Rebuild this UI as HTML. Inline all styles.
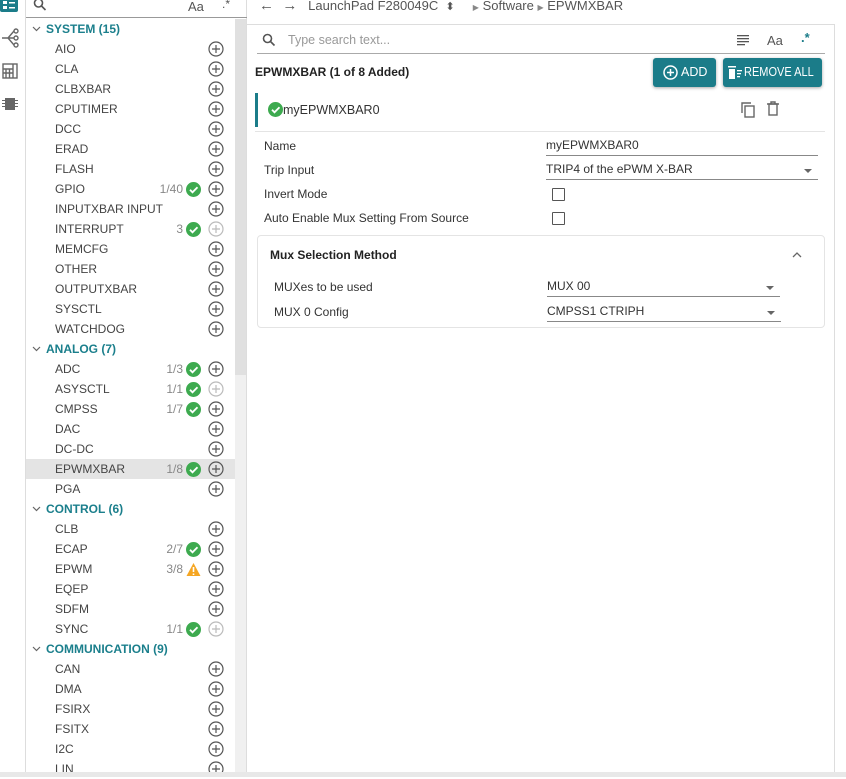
<!DOCTYPE html><html><head><meta charset="utf-8"><style>
*{box-sizing:border-box;margin:0;padding:0}
body{width:846px;height:777px;overflow:hidden;background:#fff;font-family:"Liberation Sans",sans-serif;font-size:12px;color:#333;position:relative}
.abs{position:absolute}
#iconbar{left:0;top:0;width:26px;height:777px;border-right:1px solid #ddd;background:#fff}
#side{left:26px;top:0;width:221px;height:772px;border-right:1px solid #ddd}
.row{position:absolute;left:0;width:209px;height:20px;line-height:20px}
.row .n{position:absolute;left:29px;color:#444}
.row .c{position:absolute;right:52px;color:#888}
.cat{color:#1b7f8c;font-weight:bold}
.cat .n{left:20px;color:#1b7f8c}
.cat .ch{position:absolute;left:6px;top:7px}
.plus{position:absolute;left:182px;top:2px;width:16px;height:16px}
.chk{position:absolute;left:160px;top:3px;width:15px;height:15px}
.sel{background:#e4e4e4}
#main{left:247px;top:0;width:587px;height:772px}
.lbl{position:absolute;left:17px;color:#333}
.val{position:absolute;left:299px;width:272px;border-bottom:1px solid #888;height:18px;color:#333}
.dd{position:absolute;right:6px;top:7px;width:0;height:0;border-left:4px solid transparent;border-right:4px solid transparent;border-top:4px solid #666}
.cb{position:absolute;left:305px;width:13px;height:13px;border:1.5px solid #555;border-radius:1px}
.btn{position:absolute;top:58px;height:29px;background:#1b7c89;color:#fff;border-radius:3px;box-shadow:0 1px 3px rgba(0,0,0,.35);font-size:12.5px;line-height:29px;white-space:nowrap}
</style></head><body>
<div id="iconbar" class="abs">
<svg class="abs" style="left:0;top:0" width="20" height="14"><rect x="0" y="-4" width="18" height="16" rx="2" fill="#1b7c89"/><rect x="3" y="1" width="4" height="3" fill="#fff"/><rect x="3" y="6" width="4" height="3" fill="#fff"/><rect x="9" y="2" width="6" height="1.5" fill="#fff"/><rect x="9" y="7" width="6" height="1.5" fill="#fff"/></svg>
<svg class="abs" style="left:2px;top:28px" width="18" height="20" fill="none" stroke="#666" stroke-width="1.4"><circle cx="14" cy="3" r="2"/><circle cx="14" cy="10" r="2"/><circle cx="14" cy="17" r="2"/><path d="M0 10h6M6 10L12 3M6 10h6M6 10l6 7"/></svg>
<svg class="abs" style="left:2px;top:63px" width="16" height="16" fill="none" stroke="#666" stroke-width="1.4"><rect x="1" y="1" width="14" height="14"/><path d="M1 6h10M11 1v14M1 10h10M4 6v9M7.5 6v9"/></svg>
<svg class="abs" style="left:2px;top:96px" width="16" height="16" fill="#666"><rect x="3" y="2" width="10" height="12"/><path d="M0 4h3v1H0zM0 7h3v1H0zM0 10h3v1H0zM13 4h3v1h-3zM13 7h3v1h-3zM13 10h3v1h-3z"/></svg>
</div>
<div id="side" class="abs">
<div class="abs" style="left:0;top:0;width:221px;height:18px;border-bottom:1.5px solid #999"></div>
<svg class="abs" style="left:7px;top:-2px" width="14" height="14" fill="none" stroke="#555" stroke-width="1.6"><circle cx="5.5" cy="5" r="4"/><path d="M8.5 8l4 4"/></svg>
<div class="abs" style="left:162px;top:-1px;color:#555;font-size:13px">Aa</div>
<div class="abs" style="left:196px;top:-3px;color:#555;font-size:12px">.*</div>
<div class="abs" style="left:209px;top:19px;width:11px;height:753px;background:#f0f0f0"></div>
<div class="abs" style="left:209px;top:19px;width:11px;height:356px;background:#e0e0e0"></div>
<div id="list"></div>
</div>
<div id="main" class="abs">
<div class="abs" style="left:0;top:24px;width:587px;border-top:1.5px solid #ddd"></div>
<div class="abs" style="left:12px;top:-3px;color:#555;font-size:13px;white-space:nowrap"><span style="font-size:15px">←&nbsp;&nbsp;→</span>&nbsp;&nbsp;&nbsp;LaunchPad F280049C&nbsp;&nbsp;<span style="font-size:11px">⬍</span>&nbsp;&nbsp;&nbsp;&nbsp;&nbsp;<span style="font-size:8px;color:#888">▶</span> Software <span style="font-size:8px;color:#888">▶</span> EPWMXBAR</div>
<svg class="abs" style="left:15px;top:33px" width="14" height="14" fill="none" stroke="#555" stroke-width="1.6"><circle cx="5.5" cy="5.5" r="4"/><path d="M8.5 8.5l4 4"/></svg>
<div class="abs" style="left:41px;top:33px;color:#999;font-size:12.5px">Type search text...</div>
<svg class="abs" style="left:490px;top:35px" width="12" height="11" fill="#555"><rect y="0" width="12" height="1.3"/><rect y="3" width="12" height="1.3"/><rect y="6" width="12" height="1.3"/><rect y="9" width="8" height="1.3"/></svg>
<div class="abs" style="left:520px;top:33px;color:#555;font-size:13px">Aa</div>
<div class="abs" style="left:554px;top:30px;color:#1b7c89;font-size:13px;font-weight:bold">.*</div>
<div class="abs" style="left:10px;top:53px;width:568px;border-top:1px solid #aaa"></div>
<div class="abs" style="left:8px;top:65px;font-weight:bold;color:#222;font-size:12px">EPWMXBAR (1 of 8 Added)</div>
<div class="btn" style="left:406px;width:63px"><svg class="abs" style="left:10px;top:7px" width="15" height="15" fill="none" stroke="#fff" stroke-width="1.5"><circle cx="7.5" cy="7.5" r="6.5"/><path d="M7.5 4v7M4 7.5h7"/></svg><span style="position:absolute;left:28px">ADD</span></div>
<div class="btn" style="left:476px;width:99px"><svg class="abs" style="left:4px;top:8px" width="16" height="14" fill="#fff"><rect x="1" y="0" width="8" height="1.5"/><rect x="2" y="3" width="6" height="10"/><rect x="10" y="4" width="5" height="1.3"/><rect x="10" y="7" width="4" height="1.3"/><rect x="10" y="10" width="3" height="1.3"/></svg><span style="position:absolute;left:21px;display:inline-block;transform:scaleX(.88);transform-origin:left">REMOVE ALL</span></div>
<div class="abs" style="left:8px;top:93px;width:3px;height:34px;background:#1b7c89"></div>
<svg class="abs" style="left:21px;top:102px" width="15" height="15"><circle cx="7.5" cy="7.5" r="7.5" fill="#3daa4f"/><path d="M4 7.8l2.5 2.5 5-5" fill="none" stroke="#fff" stroke-width="1.8"/></svg>
<div class="abs" style="left:36px;top:103px;font-size:12.5px;color:#333">myEPWMXBAR0</div>
<svg class="abs" style="left:493px;top:101px" width="16" height="17" fill="none" stroke="#666" stroke-width="1.4"><path d="M2 12V2h9"/><rect x="5" y="5" width="9" height="11"/></svg>
<svg class="abs" style="left:520px;top:101px" width="12" height="15" fill="none" stroke="#666" stroke-width="1.4"><path d="M0 3h12M4 3V1h4v2"/><rect x="2" y="3" width="8" height="11"/></svg>
<div class="abs" style="left:8px;top:131px;width:570px;border-top:1px solid #e4e4e4"></div>
<div class="lbl" style="top:139px">Name</div><div class="val" style="top:138px">myEPWMXBAR0</div>
<div class="lbl" style="top:163px">Trip Input</div><div class="val" style="top:162px">TRIP4 of the ePWM X-BAR<div class="dd"></div></div>
<div class="lbl" style="top:187px">Invert Mode</div><div class="cb" style="top:188px"></div>
<div class="lbl" style="top:211px">Auto Enable Mux Setting From Source</div><div class="cb" style="top:212px"></div>
<div class="abs" style="left:10px;top:235px;width:568px;height:93px;border:1px solid #e4e4e4;border-radius:4px">
<div class="abs" style="left:12px;top:12px;font-weight:bold;color:#222">Mux Selection Method</div>
<svg class="abs" style="left:534px;top:16px" width="10" height="6" fill="none" stroke="#666" stroke-width="1.3"><path d="M1 5l4-4 4 4"/></svg>
<div class="abs" style="left:16px;top:44px">MUXes to be used</div><div class="val" style="left:289px;width:233px;top:43px">MUX 00<div class="dd"></div></div>
<div class="abs" style="left:16px;top:69px">MUX 0 Config</div><div class="val" style="left:289px;width:234px;top:68px">CMPSS1 CTRIPH<div class="dd"></div></div>
</div>
</div>
<div class="abs" style="left:834px;top:24px;width:12px;height:748px;border-left:1px solid #ddd"></div>
<div class="abs" style="left:0;top:772px;width:846px;height:5px;background:#e8e8e8"></div>
<script>
var P='<svg class="plus" viewBox="0 0 16 16" fill="none" stroke="#555" stroke-width="1.2"><circle cx="8" cy="8" r="7"/><path d="M8 4v8M4 8h8"/></svg>';
var PD=P.replace('#555','#bbb');
var C='<svg class="chk" viewBox="0 0 15 15"><circle cx="7.5" cy="7.5" r="7.5" fill="#3daa4f"/><path d="M4 7.8l2.5 2.5 5-5" fill="none" stroke="#fff" stroke-width="1.8"/></svg>';
var W='<svg class="chk" viewBox="0 0 15 15"><path d="M7.5 1L14.5 14H0.5Z" fill="#f5a623"/><path d="M7.5 5v5M7.5 11.5v1.5" stroke="#fff" stroke-width="1.6"/></svg>';
var CH='<svg class="ch" width="9" height="6" fill="none" stroke="#666" stroke-width="1.2"><path d="M1 1l3.5 3.5L8 1"/></svg>';
var d=[["c","SYSTEM (15)"],"AIO","CLA","CLBXBAR","CPUTIMER","DCC","ERAD","FLASH",["GPIO","1/40","c"],"INPUTXBAR INPUT",["INTERRUPT","3","c",1],"MEMCFG","OTHER","OUTPUTXBAR","SYSCTL","WATCHDOG",["c","ANALOG (7)"],["ADC","1/3","c"],["ASYSCTL","1/1","c",1],["CMPSS","1/7","c"],"DAC","DC-DC",["EPWMXBAR","1/8","c",0,1],"PGA",["c","CONTROL (6)"],"CLB",["ECAP","2/7","c"],["EPWM","3/8","w"],"EQEP","SDFM",["SYNC","1/1","c",1],["c","COMMUNICATION (9)"],"CAN","DMA","FSIRX","FSITX","I2C","LIN"];
var h='';d.forEach(function(r,i){var t=19+i*20;
if(typeof r=="string")r=[r];
if(r[0]=="c"){h+='<div class="row cat" style="top:'+t+'px">'+CH+'<span class="n">'+r[1]+'</span></div>';return;}
h+='<div class="row'+(r[4]?' sel':'')+'" style="top:'+t+'px"><span class="n">'+r[0]+'</span>'+(r[1]?'<span class="c">'+r[1]+'</span>':'')+(r[2]=="c"?C:r[2]=="w"?W:'')+(r[3]?PD:P)+'</div>';});
document.getElementById('list').innerHTML=h;
</script>
</body></html>
